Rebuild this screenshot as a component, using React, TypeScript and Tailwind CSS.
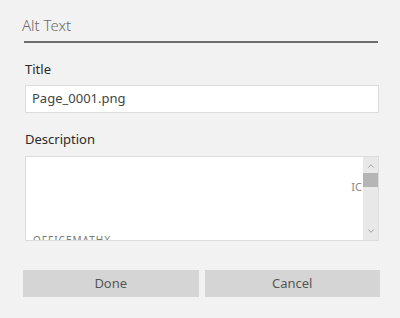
import { ChevronUp, ChevronDown } from 'lucide-react';

const font = { fontFamily: '"Noto Sans", "Open Sans", Arial, sans-serif' };

const FieldLabel = ({ children }: { children: string }) => (
  <div className="text-[13px] leading-[18px] text-[#2b2b2b]">{children}</div>
);

const DialogButton = ({ children }: { children: string }) => (
  <button className="flex-1 h-[27px] bg-[#d5d5d5] text-[13px] text-[#555] leading-none">
    {children}
  </button>
);

export default function App() {
  return (
    <div className="w-[400px] h-[318px] bg-[#f2f2f2] overflow-hidden" style={font}>
      <div className="pl-[22px] pr-[20px] pt-[14px]">
        <div className="text-[15px] leading-[22px] font-light text-[#6b6b6b]">Alt Text</div>
        <div className="mt-[5px] ml-[2px] mr-[2px] h-[2px] bg-[#6e6e6e]" />

        <div className="pl-[3px] pr-[1px]">
          <div className="mt-[17px]">
            <FieldLabel>Title</FieldLabel>
          </div>
          <div className="mt-[7px] h-[28px] bg-white border border-[#dcdcdc] flex items-center px-[6px] text-[13px] text-[#444]">
            Page_0001.png
          </div>

          <div className="mt-[17px]">
            <FieldLabel>Description</FieldLabel>
          </div>
          <div className="mt-[8px] h-[85px] bg-white border border-[#dcdcdc] flex">
            <div className="flex-1 relative overflow-hidden">
              <span className="absolute right-[1px] top-[24px] text-[11px] text-[#888] leading-none">IC</span>
              <span className="absolute left-[7px] bottom-[-5px] text-[10px] text-[#777] tracking-[1px] leading-none">
                OFFICEMATHX
              </span>
            </div>
            <div className="w-[15px] bg-[#e8e8e8] flex flex-col items-center">
              <ChevronUp size={10} strokeWidth={1.5} className="text-[#777] mt-[4px]" />
              <div className="w-full h-[14px] bg-[#b5b5b5] mt-[2px]" />
              <div className="flex-1" />
              <ChevronDown size={10} strokeWidth={1.5} className="text-[#777] mb-[4px]" />
            </div>
          </div>
        </div>

        <div className="mt-[29px] flex gap-[6px] pl-[1px] pr-0">
          <DialogButton>Done</DialogButton>
          <DialogButton>Cancel</DialogButton>
        </div>
      </div>
    </div>
  );
}
